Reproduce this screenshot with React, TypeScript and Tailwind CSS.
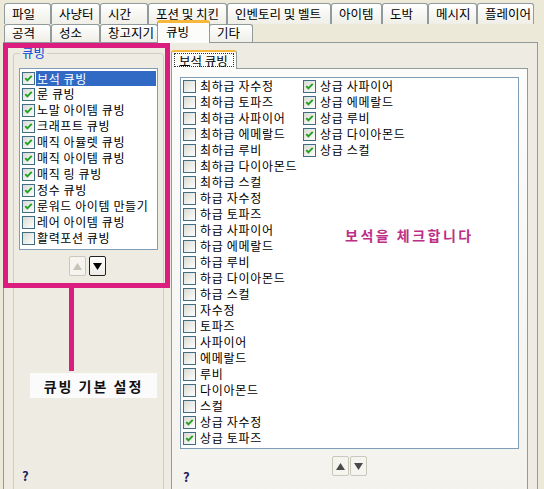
import React from "react";

function Box({ checked }: { checked: boolean }) {
  return (
    <svg width="13" height="13" viewBox="0 0 13 13" className="shrink-0">
      <defs>
        <linearGradient id="cbfill" x1="0" y1="0" x2="1" y2="1">
          <stop offset="0" stopColor="#d9d9d2" />
          <stop offset="1" stopColor="#ffffff" />
        </linearGradient>
      </defs>
      <rect x="0.5" y="0.5" width="12" height="12" fill="url(#cbfill)" stroke="#3f6d84" />
      {checked && (
        <path d="M3.3 6.1 L5.4 8.4 L9.7 3.9" fill="none" stroke="#21a121" strokeWidth="1.9" />
      )}
    </svg>
  );
}

function Arrow({ up, color }: { up: boolean; color: string }) {
  return (
    <svg width="9" height="7" viewBox="0 0 9 7">
      <path d={up ? "M0 7 L4.5 0 L9 7 Z" : "M0 0 L9 0 L4.5 7 Z"} fill={color} />
    </svg>
  );
}

const row1 = [
  { t: "파일", w: "w-[47px]" },
  { t: "사냥터", w: "w-[49px]" },
  { t: "시간", w: "w-[48px]" },
  { t: "포션 및 치킨", w: "w-[79px]" },
  { t: "인벤토리 및 벨트", w: "w-[104px]" },
  { t: "아이템", w: "w-[51px]" },
  { t: "도박", w: "w-[46px]" },
  { t: "메시지", w: "w-[49px]" },
  { t: "플레이어", w: "w-[57px]" },
];

const row2 = [
  { t: "공격", w: "w-[47px]", s: false },
  { t: "성소", w: "w-[49px]", s: false },
  { t: "창고지기", w: "w-[58px]", s: false },
  { t: "큐빙", w: "w-[53px]", s: true },
  { t: "기타", w: "w-[44px]", s: false },
];

const leftItems: [string, boolean][] = [
  ["보석 큐빙", true],
  ["룬 큐빙", true],
  ["노말 아이템 큐빙", true],
  ["크래프트 큐빙", true],
  ["매직 아뮬렛 큐빙", true],
  ["매직 아이템 큐빙", true],
  ["매직 링 큐빙", true],
  ["정수 큐빙", true],
  ["룬워드 아이템 만들기", true],
  ["레어 아이템 큐빙", false],
  ["활력포션 큐빙", false],
];

const gems1: [string, boolean][] = [
  ["최하급 자수정", false],
  ["최하급 토파즈", false],
  ["최하급 사파이어", false],
  ["최하급 에메랄드", false],
  ["최하급 루비", false],
  ["최하급 다이아몬드", false],
  ["최하급 스컬", false],
  ["하급 자수정", false],
  ["하급 토파즈", false],
  ["하급 사파이어", false],
  ["하급 에메랄드", false],
  ["하급 루비", false],
  ["하급 다이아몬드", false],
  ["하급 스컬", false],
  ["자수정", false],
  ["토파즈", false],
  ["사파이어", false],
  ["에메랄드", false],
  ["루비", false],
  ["다이아몬드", false],
  ["스컬", false],
  ["상급 자수정", true],
  ["상급 토파즈", true],
];

const gems2: [string, boolean][] = [
  ["상급 사파이어", true],
  ["상급 에메랄드", true],
  ["상급 루비", true],
  ["상급 다이아몬드", true],
  ["상급 스컬", true],
];

export default function App() {
  return (
    <div className="relative w-[544px] h-[489px] overflow-hidden bg-[#ece9d8] font-['Noto_Sans_CJK_KR','Noto_Sans',sans-serif] text-[12px] leading-[16px] text-black">
      {/* tab row 1 */}
      <div className="flex pl-[4px] pt-[3px]">
        {row1.map((t) => (
          <div
            key={t.t}
            className={`${t.w} h-[21px] shrink-0 border border-b-0 border-[#919b9c] rounded-t-[3px] bg-linear-to-b from-white to-[#efeee7] pt-[2px] pl-[7px] whitespace-nowrap overflow-hidden text-[12.5px]`}
          >
            {t.t}
          </div>
        ))}
      </div>
      {/* tab row 2 */}
      <div className="relative z-10 flex items-end h-[18px] pl-[4px]">
        {row2.map((t) =>
          t.s ? (
            <div
              key={t.t}
              className={`${t.w} h-[23px] -mb-[1px] -mx-[1px] shrink-0 border border-b-0 border-[#919b9c] border-t-[3px] border-t-[#f7b73c] rounded-t-[3px] bg-[#fcfcfa] pt-[1px] pl-[8px] text-[12.5px] whitespace-nowrap`}
            >
              {t.t}
            </div>
          ) : (
            <div
              key={t.t}
              className={`${t.w} h-[18px] shrink-0 border border-b-0 border-[#919b9c] rounded-t-[3px] bg-linear-to-b from-white to-[#efeee7] pl-[7px] text-[12.5px] whitespace-nowrap`}
            >
              {t.t}
            </div>
          )
        )}
      </div>

      {/* outer page */}
      <div className="ml-[3px] w-[535px] h-[460px] border border-[#919b9c] bg-[#eeece2] flex">
        {/* left column: group box */}
        <div className="ml-[9px] mt-[10px] w-[151px] h-[460px] shrink-0 border border-[#d0d0bf] rounded-[3px] flex flex-col">
          <div className="-mt-[8px] ml-[6px] w-fit px-[2px] bg-[#eeece2] text-[#0046d5] text-[12.5px] leading-[14px] h-[14px]">
            큐빙
          </div>
          <div className="mt-[8px] ml-[5px] w-[139px] h-[182px] border border-[#7f9db9] bg-white pt-[1px] tracking-[0.6px]">
            {leftItems.map(([t, c], i) => (
              <div key={t} className="flex h-[16px] items-center pl-[2px]">
                <Box checked={c} />
                {i === 0 ? (
                  <span className="ml-[1px] mr-[1px] flex-1 h-[15px] leading-[15px] pl-[1px] bg-[#316ac5] text-white whitespace-nowrap">
                    {t}
                  </span>
                ) : (
                  <span className="ml-[2px] whitespace-nowrap">{t}</span>
                )}
              </div>
            ))}
          </div>
          <div className="mt-[6px] flex justify-center gap-[3px] pr-[2px]">
            <div className="w-[17px] h-[20px] rounded-[2px] border border-[#cac8bb] bg-[#f5f4ef] flex items-center justify-center">
              <Arrow up color="#c5c3b8" />
            </div>
            <div className="w-[17px] h-[20px] rounded-[2px] border border-[#222222] bg-linear-to-b from-white to-[#ecebe6] flex items-center justify-center">
              <Arrow up={false} color="#000000" />
            </div>
          </div>
          <div className="mt-[193px] ml-[8px] text-[13px] font-bold text-[#1e1e66] leading-[14px]">?</div>
        </div>

        {/* right column: inner tab control */}
        <div className="ml-[7px] mt-[7px] flex flex-col">
          <div className="relative z-10 ml-[0px] w-[66px] h-[19px] -mb-[1px] border border-b-0 border-[#919b9c] border-t-[2px] border-t-[#f7b73c] rounded-t-[3px] bg-[#fcfcfa] px-[2px] pt-[1px]">
            <div className="h-[14px] border border-dotted border-[#333] leading-[13px] pl-[4px] text-[12.5px] whitespace-nowrap">
              보석 큐빙
            </div>
          </div>
          <div className="w-[357px] h-[430px] border border-[#919b9c] bg-linear-to-b from-[#fcfcfb] to-[#f3f2ec] pt-[8px] px-[8px] flex flex-col">
            <div className="w-[339px] h-[372px] border border-[#7f9db9] bg-white flex pl-[2px] tracking-[0.7px]">
              <div className="w-[120px] shrink-0">
                {gems1.map(([t, c]) => (
                  <div key={t} className="flex h-[16px] items-center">
                    <Box checked={c} />
                    <span className="ml-[4px] whitespace-nowrap">{t}</span>
                  </div>
                ))}
              </div>
              <div>
                {gems2.map(([t, c]) => (
                  <div key={t} className="flex h-[16px] items-center">
                    <Box checked={c} />
                    <span className="ml-[4px] whitespace-nowrap">{t}</span>
                  </div>
                ))}
              </div>
            </div>
            <div className="mt-[7px] flex justify-center gap-[1px]">
              <div className="w-[17px] h-[20px] rounded-[2px] border border-[#cac8bb] bg-[#f5f4ef] flex items-center justify-center">
                <Arrow up color="#4a4a4a" />
              </div>
              <div className="w-[17px] h-[20px] rounded-[2px] border border-[#cac8bb] bg-[#f5f4ef] flex items-center justify-center">
                <Arrow up={false} color="#4a4a4a" />
              </div>
            </div>
            <div className="-mt-[6px] ml-[3px] text-[13px] font-bold text-[#1e1e66] leading-[14px]">?</div>
          </div>
        </div>
      </div>

      {/* annotations */}
      <div className="absolute left-[3px] top-[43px] w-[167px] h-[245px] border-[5px] border-[#dc1d80]" />
      <div className="absolute left-[69px] top-[286px] w-[5px] h-[85px] bg-[#dc1d80]" />
      <div className="absolute left-[30px] top-[373px] w-[127px] h-[25px] bg-[#fbfbfb] flex items-center justify-center text-[14px] font-bold tracking-[2px] text-[#111]">
        큐빙 기본 설정
      </div>
      <div className="absolute left-[345px] top-[226px] text-[14px] leading-[18px] tracking-[2.5px] text-[#bd2f86] whitespace-nowrap">
        <span className="font-semibold">보석을</span> <span className="font-bold">체크합니다</span>
      </div>
    </div>
  );
}
